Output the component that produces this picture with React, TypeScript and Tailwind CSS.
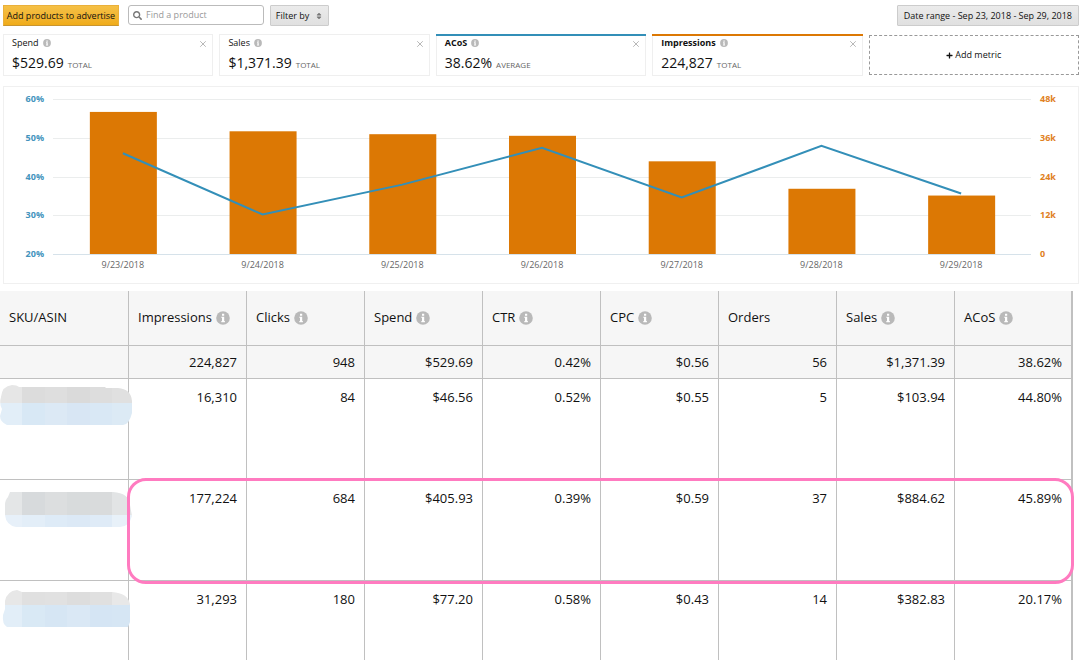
import React, { useState } from "react";
import { FaPlus, FaSearch, FaSort } from "react-icons/fa";
import { X } from "lucide-react";

type Metric = {
  name: string;
  value: string;
  unit: string;
  accent?: string;
};

const metrics: Metric[] = [
  { name: "Spend", value: "$529.69", unit: "TOTAL" },
  { name: "Sales", value: "$1,371.39", unit: "TOTAL" },
  { name: "ACoS", value: "38.62%", unit: "AVERAGE", accent: "bg-[#338fb8]" },
  { name: "Impressions", value: "224,827", unit: "TOTAL", accent: "bg-[#dc7804]" },
];

const days = [
  { date: "9/23/2018", impressions: 44, acos: 46 },
  { date: "9/24/2018", impressions: 38, acos: 30.2 },
  { date: "9/25/2018", impressions: 37.1, acos: 37.9 },
  { date: "9/26/2018", impressions: 36.6, acos: 47.4 },
  { date: "9/27/2018", impressions: 28.7, acos: 34.6 },
  { date: "9/28/2018", impressions: 20.2, acos: 47.9 },
  { date: "9/29/2018", impressions: 18.1, acos: 35.6 },
];

const ticks = [
  { left: "60%", right: "48k" },
  { left: "50%", right: "36k" },
  { left: "40%", right: "24k" },
  { left: "30%", right: "12k" },
  { left: "20%", right: "0" },
];

const columns = [
  { label: "Impressions", info: true },
  { label: "Clicks", info: true },
  { label: "Spend", info: true },
  { label: "CTR", info: true },
  { label: "CPC", info: true },
  { label: "Orders", info: false },
  { label: "Sales", info: true },
  { label: "ACoS", info: true },
];

const totals = ["224,827", "948", "$529.69", "0.42%", "$0.56", "56", "$1,371.39", "38.62%"];

const rows = [
  ["16,310", "84", "$46.56", "0.52%", "$0.55", "5", "$103.94", "44.80%"],
  ["177,224", "684", "$405.93", "0.39%", "$0.59", "37", "$884.62", "45.89%"],
  ["31,293", "180", "$77.20", "0.58%", "$0.43", "14", "$382.83", "20.17%"],
];

// Outline of each hidden SKU and the line where grey turns to blue
const masks = [
  {
    split: 24,
    path: "M1 18Q2 7 12 6Q17 6 19 8H105L106 9H118Q131 10 132 22V34Q129 46 123 46H7Q0 43 0 37L2 30Q-1 25 1 18Z",
    grey: ["#e6e6e6", "#dcdcdc", "#dedede", "#dadada", "#dddddd", "#e0e0e0"],
    blue: ["#e2eef8", "#d8e8f5", "#dce9f5", "#d8e6f4", "#d9e8f5", "#dceaf5"],
  },
  {
    split: 35,
    path: "M8 17L10 12H113Q129 13 130 25L132 36Q129 47 120 47H16Q6 45 5 35V25Q5 20 8 17Z",
    grey: ["#e4e6e7", "#d7dadc", "#dcdedf", "#d8dbdc", "#d9dbdc", "#e2e4e5"],
    blue: ["#e7f0f9", "#e3eef8", "#deebf7", "#dce9f6", "#dfebf7", "#e8f1f9"],
  },
  {
    split: 24,
    path: "M5 20Q7 10 17 9L22 11H112Q128 12 130 23V41L128 46H7Q2 43 3 34L5 28Z",
    grey: ["#e7e7e7", "#e0e0e0", "#e1e1e1", "#dddddd", "#e0e0e0", "#e8e8e8"],
    blue: ["#e2eef8", "#d9e9f5", "#d6e6f4", "#dae8f5", "#d5e5f4", "#d6e6f4"],
  },
];

const InfoIcon = ({ className }: { className: string }) => (
  <svg viewBox="0 0 14 14" className={className} aria-hidden="true">
    <circle cx="7" cy="7" r="6.8" fill="#b9b9b9" />
    <path d="M6 2.8h2.2v1.9H6zM5.3 5.7h2.9v4.4h.7v1.1H5.3v-1.1H6V6.8h-.7z" fill="#fff" />
  </svg>
);

const MetricCard = ({ metric, onClose }: { metric: Metric; onClose: () => void }) => (
  <section className="relative h-[42px] border border-[#efefef] pt-[3px] pr-1 pl-2">
    {metric.accent && (
      <div className={`absolute -inset-x-px -top-px h-[2px] ${metric.accent}`} />
    )}
    <div className="flex items-start justify-between">
      <h2
        className={`flex items-center gap-1 text-[9px] leading-[10px] ${
          metric.accent ? "font-bold" : ""
        }`}
      >
        {metric.name}
        <InfoIcon className="h-2 w-2" />
      </h2>
      <button aria-label={`Remove ${metric.name}`} onClick={onClose} className="pt-px">
        <X className="h-[10px] w-[10px] text-[#aaa]" />
      </button>
    </div>
    <p className="mt-1 flex items-baseline gap-1 text-sm">
      {metric.value}
      <span className="text-[8px] text-[#666]">{metric.unit}</span>
    </p>
  </section>
);

const Chart = () => {
  const left = 49;
  const right = 1027;
  const top = 12;
  const bottom = 167;
  const band = (right - left) / days.length;
  const centerX = (i: number) => left + band * (i + 0.5);
  const acosY = (v: number) => bottom - ((v - 20) / 40) * (bottom - top);

  return (
    <svg
      viewBox="0 0 1074 196"
      className="block w-full"
      fontSize="9"
      role="img"
      aria-label="ACoS and impressions by day"
    >
      {ticks.map((tick, i) => {
        const y = Math.round(top + (i * (bottom - top)) / 4);
        return (
          <g key={tick.left}>
            <rect
              x={left}
              y={y}
              width={right - left}
              height="1"
              fill={i === 4 ? "#d6e2ea" : "#ebeded"}
            />
            <text x="40" y={y + 3} textAnchor="end" fontWeight="bold" fill="#4394bd">
              {tick.left}
            </text>
            <text x="1036" y={y + 3} fontWeight="bold" fill="#e08022">
              {tick.right}
            </text>
          </g>
        );
      })}
      {days.map((day, i) => {
        const height = (day.impressions / 48) * (bottom - top);
        return (
          <g key={day.date}>
            <rect
              x={centerX(i) - 33}
              y={bottom - height}
              width="67"
              height={height}
              fill="#dc7804"
            />
            <text x={centerX(i)} y="181" textAnchor="middle" fill="#666">
              {day.date}
            </text>
          </g>
        );
      })}
      <polyline
        points={days.map((day, i) => `${centerX(i)},${acosY(day.acos)}`).join(" ")}
        fill="none"
        stroke="#338fb8"
        strokeWidth="2"
      />
    </svg>
  );
};

const MaskedSku = ({ index }: { index: number }) => {
  const mask = masks[index];
  return (
    <svg viewBox="0 0 132 50" className="absolute top-0 left-0 h-[50px] w-[132px]" aria-hidden="true">
      <clipPath id={`mask-${index}`}>
        <path d={mask.path} />
      </clipPath>
      <g clipPath={`url(#mask-${index})`} shapeRendering="crispEdges">
        {mask.grey.map((color, i) => (
          <rect key={i} x={i * 22.4} y="0" width="23" height={mask.split} fill={color} />
        ))}
        {mask.blue.map((color, i) => (
          <rect key={i} x={i * 22.4} y={mask.split} width="23" height="30" fill={color} />
        ))}
      </g>
    </svg>
  );
};

const App = () => {
  const [search, setSearch] = useState("");
  const [shown, setShown] = useState(metrics);

  return (
    <main className="bg-white font-['Open_Sans',sans-serif] text-[#111]">
      <header className="flex h-[34px] items-start pt-[5px] pr-px pl-[3px] text-[9px]">
        <button className="h-[21px] w-[116px] border border-[#eab03a] border-b-[#c9952f] bg-linear-to-b from-[#f5c045] to-[#f0ac18] whitespace-nowrap">
          Add products to advertise
        </button>
        <label className="ml-[9px] flex h-5 w-[136px] items-center gap-1 rounded-[3px] border border-[#bbb] px-1">
          <FaSearch className="h-[9px] w-[9px] shrink-0 text-[#777]" />
          <input
            value={search}
            onChange={(e) => setSearch(e.target.value)}
            placeholder="Find a product"
            aria-label="Find a product"
            className="w-full min-w-0 outline-none placeholder:text-[#999]"
          />
        </label>
        <button className="ml-[6px] flex h-[21px] w-[59px] items-center justify-center gap-[6px] rounded-[1px] border border-[#ccc] bg-linear-to-b from-[#ebebeb] to-[#e0e0e0] whitespace-nowrap">
          Filter by
          <FaSort className="h-2 w-2 text-[#777]" />
        </button>
        <button className="ml-auto h-[21px] rounded-[1px] border border-[#ccc] bg-linear-to-b from-[#ebebeb] to-[#e0e0e0] px-[6px]">
          Date range - Sep 23, 2018 - Sep 29, 2018
        </button>
      </header>

      <div className="grid grid-cols-5 gap-[6px] pr-px pl-[3px]">
        {shown.map((metric) => (
          <MetricCard
            key={metric.name}
            metric={metric}
            onClose={() => setShown(shown.filter((m) => m !== metric))}
          />
        ))}
        <button className="my-px flex items-center justify-center gap-[2px] border border-dashed border-[#999] text-[9px]">
          <FaPlus className="h-[7px] w-[7px]" />
          Add metric
        </button>
      </div>

      <div className="mt-[10px] mr-px ml-[3px] border border-[#f0f0f0]">
        <Chart />
      </div>

      <div className="relative mt-[7px] mr-[7px]">
        <table className="w-full table-fixed border-separate border-spacing-0 text-[13px]">
          <colgroup>
            <col className="w-[129px]" />
            {columns.map((column) => (
              <col key={column.label} />
            ))}
          </colgroup>
          <thead>
            <tr className="h-[55px] bg-[#f6f6f6] text-left">
              <th className="border-r border-b border-[#c0c0c0] px-[9px] font-normal">SKU/ASIN</th>
              {columns.map((column) => (
                <th
                  key={column.label}
                  className="border-r border-b border-[#c0c0c0] px-[9px] font-normal last:border-r-2"
                >
                  <span className="flex items-center gap-1">
                    {column.label}
                    {column.info && <InfoIcon className="h-[14px] w-[14px] shrink-0" />}
                  </span>
                </th>
              ))}
            </tr>
          </thead>
          <tbody>
            <tr className="h-[33px] bg-[#f6f6f6] text-right">
              <td className="border-r border-b border-[#c0c0c0]" />
              {totals.map((value, i) => (
                <td
                  key={i}
                  className="border-r border-b border-[#c0c0c0] px-[9px] pt-px last:border-r-2"
                >
                  {value}
                </td>
              ))}
            </tr>
            {rows.map((row, r) => (
              <tr key={r} className="h-[101px] text-right align-top last:h-[79px]">
                <td className={`relative border-r border-[#c0c0c0] ${r < 2 ? "border-b" : ""}`}>
                  <MaskedSku index={r} />
                </td>
                {row.map((value, i) => (
                  <td
                    key={i}
                    className={`border-r border-[#c0c0c0] px-[9px] pt-[9px] last:border-r-2 ${
                      r < 2 ? "border-b" : ""
                    }`}
                  >
                    {value}
                  </td>
                ))}
              </tr>
            ))}
          </tbody>
        </table>
        <div className="pointer-events-none absolute top-[187px] -right-px left-[127px] h-[106px] rounded-[19px] border-3 border-[#ff7bc0]" />
      </div>
    </main>
  );
};

export default App;
